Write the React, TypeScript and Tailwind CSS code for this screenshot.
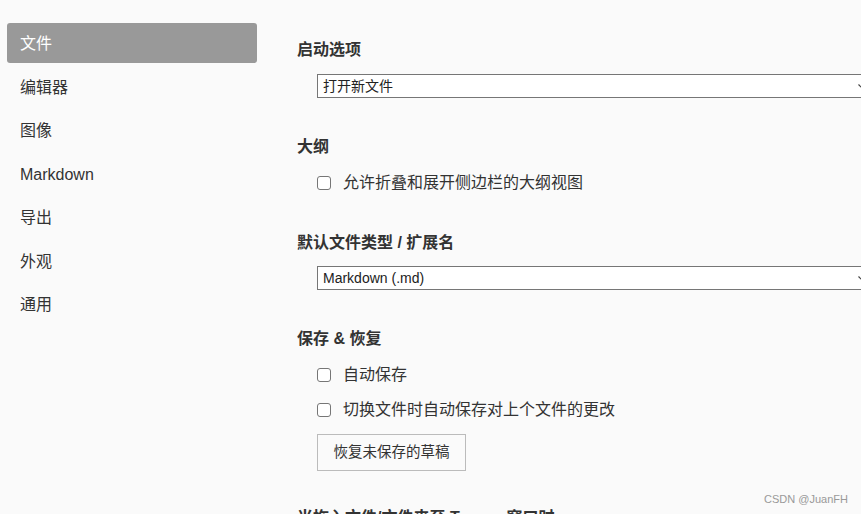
import React from "react";

const font = "font-['Liberation_Sans','Noto_Sans_CJK_SC',sans-serif]";

const navItems = ["文件", "编辑器", "图像", "Markdown", "导出", "外观", "通用"];

function Heading({ children }: { children: React.ReactNode }) {
  return <h2 className="h-6 text-[16px] leading-6 font-bold text-[#333]">{children}</h2>;
}

function Select({ value }: { value: string }) {
  return (
    <div className="ml-5 flex h-6 w-[556px] items-center justify-between border border-[#767676] bg-white pl-[5px] pr-[6px] text-[14px] leading-5 text-[#222]">
      <span>{value}</span>
      <svg width="8" height="5" viewBox="0 0 8 5" className="text-[#444]">
        <path d="M0.5 0.5 L4 4 L7.5 0.5" fill="none" stroke="currentColor" strokeWidth="1.2" />
      </svg>
    </div>
  );
}

function Checkbox({ label }: { label: string }) {
  return (
    <div className="ml-5 flex h-6 items-center gap-3 text-[16px] leading-6 text-[#333]">
      <span className="h-[14px] w-[14px] rounded-[3px] border border-[#767676] bg-white" />
      <span>{label}</span>
    </div>
  );
}

export default function App() {
  return (
    <div className={`${font} relative flex h-[514px] w-[861px] overflow-hidden bg-[#fafafa]`}>
      <nav className="flex w-[257px] shrink-0 flex-col gap-[3.5px] pl-[7px] pt-[23px]">
        {navItems.map((item, i) => (
          <div
            key={item}
            className={
              i === 0
                ? "flex h-10 items-center rounded-[3px] bg-[#999] pl-[13px] text-[16px] leading-6 text-white"
                : "flex h-10 items-center pl-[13px] text-[16px] leading-6 text-[#333]"
            }
          >
            <span className="translate-y-px">{item}</span>
          </div>
        ))}
      </nav>

      <main className="block shrink-0 pl-10 pt-[38px]">
        <Heading>启动选项</Heading>
        <div className="mt-3">
          <Select value="打开新文件" />
        </div>

        <div className="mt-[37px]">
          <Heading>大纲</Heading>
        </div>
        <div className="mt-3">
          <Checkbox label="允许折叠和展开侧边栏的大纲视图" />
        </div>

        <div className="mt-9">
          <Heading>默认文件类型 / 扩展名</Heading>
        </div>
        <div className="mt-[11px]">
          <Select value="Markdown (.md)" />
        </div>

        <div className="mt-[37px]">
          <Heading>保存 &amp; 恢复</Heading>
        </div>
        <div className="mt-3">
          <Checkbox label="自动保存" />
        </div>
        <div className="mt-[11px]">
          <Checkbox label="切换文件时自动保存对上个文件的更改" />
        </div>
        <div className="mt-3 pl-5">
          <button className="h-[37px] w-[149px] border border-[#bbb] bg-[#fafafa] text-[14.5px] text-[#333]">
            恢复未保存的草稿
          </button>
        </div>

        <div className="mt-[35px]">
          <Heading>当拖入文件/文件夹至 Typora 窗口时</Heading>
        </div>
      </main>

      <div className="absolute bottom-[7px] right-[13px] text-[11px] text-[#999]">CSDN @JuanFH</div>
    </div>
  );
}
